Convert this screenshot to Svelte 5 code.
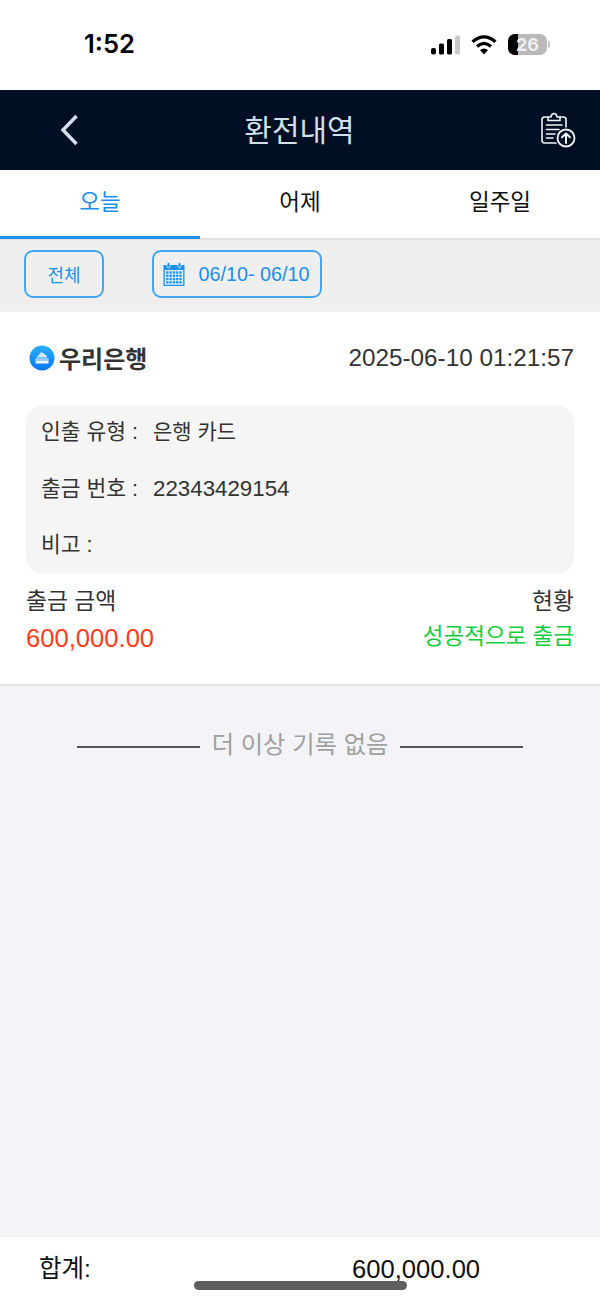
<script>
  const tabs = ['오늘', '어제', '일주일'];
  const rows = [
    { label: '인출 유형 :', value: '은행 카드', num: false },
    { label: '출금 번호 :', value: '22343429154', num: true },
    { label: '비고 :', value: '', num: false }
  ];
  const cells = [];
  for (let r = 0; r < 4; r++) for (let c = 0; c < 5; c++) cells.push({ x: 3.2 + c * 3.3, y: 9.3 + r * 3.3 });
</script>

<div class="page">
  <div class="status">
    <span class="time">1:52</span>
    <div class="status-icons">
      <svg class="signal" width="30" height="20" viewBox="0 0 30 20" aria-hidden="true">
        <rect x="1" y="13" width="5" height="6.5" rx="2" fill="#000"/>
        <rect x="9" y="8.500" width="5" height="11" rx="1.500" fill="#000"/>
        <rect x="17" y="4" width="5" height="15.500" rx="1.500" fill="#000"/>
        <rect x="25" y="0.500" width="5" height="19" rx="1.500" fill="#c9c9c9"/>
      </svg>
      <svg class="wifi" width="26" height="20" viewBox="0 0 26 20" aria-hidden="true">
        <path d="M1.500 6.800 Q13 -3.200 24.500 6.800" fill="none" stroke="#000" stroke-width="3.200"/>
        <path d="M6 11.500 Q13 5.300 20 11.500" fill="none" stroke="#000" stroke-width="3.200"/>
        <path d="M9 15 Q13 12 17 15 L13 19.500 Z" fill="#000"/>
      </svg>
      <div class="battery">
        <span class="battery-fill"></span>
        <span class="battery-num">26</span>
      </div>
      <span class="battery-cap"></span>
    </div>
  </div>

  <header class="nav">
    <svg class="back" width="20" height="32" viewBox="0 0 20 32" aria-hidden="true">
      <path d="M16.500 2 L3 16 L16.500 30" fill="none" stroke="#d3dfea" stroke-width="3.500"/>
    </svg>
    <h1>환전내역</h1>
    <svg class="upload" width="36" height="36" viewBox="0 0 36 36" aria-hidden="true">
      <g fill="none" stroke="#f2f5f8" stroke-width="1.600" stroke-linejoin="round" stroke-linecap="round">
        <path d="M8 5 H4.500 Q2 5 2 7.500 V28 Q2 31 4.500 31 H16"/>
        <path d="M20 5 H23.500 Q26 5 26 7.500 V15"/>
        <path d="M8 8.500 V5 H11 Q11.500 1.500 14 1.500 Q16.500 1.500 17 5 H20 V8.500 Z"/>
        <path d="M6.500 13 H22 M6.500 17.500 H19 M6.500 22 H15 M6.500 26 H13"/>
        <circle cx="26" cy="26" r="8.500" stroke-width="1.800"/>
        <path d="M26 31 V21.500 M22 25.300 L26 21.500 L30 25.300" stroke-width="2"/>
      </g>
    </svg>
  </header>

  <nav class="tabs">
    {#each tabs as tab, i}
      <div class="tab" class:active={i === 0}>{tab}</div>
    {/each}
  </nav>

  <div class="filters">
    <div class="chip all">전체</div>
    <div class="chip range">
      <svg width="22" height="24" viewBox="0 0 22 24" aria-hidden="true">
        <path d="M0.500 3 H21.500 V24 H0.500 Z" fill="#1b90ea"/>
        <rect x="1.800" y="8" width="18.400" height="14.800" fill="#e4f1fc"/>
        <rect x="4" y="0.500" width="3" height="5.500" rx="1.500" fill="#1b90ea" stroke="#efefef" stroke-width="0.800"/>
        <rect x="15" y="0.500" width="3" height="5.500" rx="1.500" fill="#1b90ea" stroke="#efefef" stroke-width="0.800"/>
        {#each cells as cell}
          <rect x={cell.x} y={cell.y} width="2.300" height="2.300" fill="#1b90ea"/>
        {/each}
      </svg>
      <span>06/10- 06/10</span>
    </div>
  </div>

  <section class="card">
    <div class="card-head">
      <div class="bank">
        <svg width="26" height="26" viewBox="0 0 26 26" aria-hidden="true">
          <defs>
            <linearGradient id="bankGrad" x1="0" y1="0" x2="0" y2="1">
              <stop offset="0" stop-color="#2ab0f5"/>
              <stop offset="1" stop-color="#0a74f5"/>
            </linearGradient>
          </defs>
          <circle cx="13" cy="13" r="12.500" fill="url(#bankGrad)"/>
          <path d="M7.500 12.500 L12.500 7 L18 11 L18 12.500 Z" fill="#cfe9ff"/>
          <path d="M6.500 13.500 H19.500 V18.500 H6.500 Z" fill="#eaf6ff"/>
          <path d="M6.500 15 H19.500" stroke="#4aa8f5" stroke-width="1"/>
        </svg>
        <span>우리은행</span>
      </div>
      <span class="date">2025-06-10 01:21:57</span>
    </div>

    <div class="details">
      {#each rows as row}
        <div class="row">
          <span class="label">{row.label}</span>
          {#if row.value}<span class="value" class:num={row.num}>{row.value}</span>{/if}
        </div>
      {/each}
    </div>

    <div class="summary">
      <div class="col">
        <span class="cap">출금 금액</span>
        <span class="amount">600,000.00</span>
      </div>
      <div class="col right">
        <span class="cap">현황</span>
        <span class="state">성공적으로 출금</span>
      </div>
    </div>
  </section>

  <main class="list">
    <div class="end">
      <span class="line"></span>
      <span class="end-text">더 이상 기록 없음</span>
      <span class="line"></span>
    </div>
  </main>

  <footer class="total">
    <span class="total-label">합계:</span>
    <span class="total-value">600,000.00</span>
    <span class="home"></span>
  </footer>
</div>

<style>
  :global(body) {
    margin: 0;
    background: #fff;
  }
  .page {
    position: relative;
    width: 600px;
    height: 1301px;
    display: flex;
    flex-direction: column;
    overflow: hidden;
    background: #f3f3f8;
    font-family: "Liberation Sans", "Noto Sans CJK KR", sans-serif;
  }
  .status {
    flex: 0 0 90px;
    box-sizing: border-box;
    background: #fff;
    display: flex;
    justify-content: space-between;
    align-items: flex-start;
    padding: 29px 50px 0 84px;
  }
  .time {
    font-family: Inter, "Liberation Sans", sans-serif;
    font-size: 25.500px;
    line-height: 30px;
    font-weight: 600;
    color: #000;
  }
  .status-icons {
    display: flex;
    align-items: center;
    margin-top: 5px;
  }
  .signal { margin-right: 11px; }
  .wifi { margin-right: 11px; }
  .battery {
    position: relative;
    width: 39px;
    height: 21px;
    border-radius: 7px;
    background: #b9b9b9;
    overflow: hidden;
    display: flex;
    align-items: center;
    justify-content: center;
  }
  .battery-fill {
    position: absolute;
    left: 0;
    top: 0;
    bottom: 0;
    width: 10px;
    background: #000;
  }
  .battery-num {
    position: relative;
    font-family: Inter, "Liberation Sans", sans-serif;
    font-size: 18px;
    font-weight: 700;
    color: #f0f0f0;
    line-height: 21px;
  }
  .battery-cap {
    width: 2px;
    height: 7px;
    margin-left: 1px;
    border-radius: 0 2px 2px 0;
    background: #c4c4c4;
  }
  .nav {
    flex: 0 0 80px;
    box-sizing: border-box;
    background: #000f24;
    display: flex;
    align-items: center;
    justify-content: space-between;
    padding: 0 24px 0 60px;
  }
  .nav h1 {
    margin: 0 21px 4px 0;
    font-size: 30px;
    font-weight: 400;
    color: #d3dfea;
  }
  .tabs {
    flex: 0 0 70px;
    min-height: 0;
    box-sizing: border-box;
    display: flex;
    background: #fff;
    border-bottom: 2px solid #e2e2e2;
  }
  .tab {
    flex: 1;
    height: 69px;
    box-sizing: border-box;
    text-align: center;
    padding-top: 16px;
    font-size: 22.500px;
    line-height: 34px;
    color: #111;
  }
  .tab.active {
    color: #1b90ea;
    border-bottom: 3px solid #1b90ea;
  }
  .filters {
    flex: 0 0 72px;
    box-sizing: border-box;
    background: #efefef;
    display: flex;
    gap: 48px;
    padding: 10px 24px 0;
    border-bottom: 1px solid #f2f2f2;
  }
  .chip {
    height: 48px;
    box-sizing: border-box;
    border: 2px solid #45a5ef;
    border-radius: 9px;
    color: #1b90ea;
    display: flex;
    align-items: center;
    justify-content: center;
    font-size: 18px;
  }
  .all { width: 80px; }
  .range {
    width: 170px;
    gap: 13px;
    padding-right: 1px;
    font-size: 19.800px;
  }
  .card {
    flex: 0 0 374px;
    box-sizing: border-box;
    background: #fff;
    border-bottom: 2px solid #e2e2e2;
    padding: 0 26px;
  }
  .card-head {
    display: flex;
    justify-content: space-between;
    align-items: center;
    height: 93px;
    box-sizing: border-box;
    padding-bottom: 2px;
    color: #333;
  }
  .bank {
    display: flex;
    align-items: center;
    gap: 4px;
    padding-left: 3px;
    font-size: 24px;
    font-weight: 700;
  }
  .date { font-size: 24.300px; }
  .details {
    height: 168px;
    box-sizing: border-box;
    background: #f5f5f5;
    border-radius: 16px;
    padding: 13px 15px 0;
    display: flex;
    flex-direction: column;
    gap: 28.500px;
  }
  .row {
    display: flex;
    align-items: baseline;
    color: #333;
    font-size: 21.500px;
    line-height: 28px;
  }
  .label { margin-right: 15px; }
  .value { font-size: 21px; }
  .value.num { font-size: 22.300px; }
  .summary {
    display: flex;
    justify-content: space-between;
    margin-top: 13px;
  }
  .col {
    display: flex;
    flex-direction: column;
    gap: 7px;
  }
  .right { align-items: flex-end; }
  .cap {
    font-size: 22.800px;
    line-height: 30px;
    color: #333;
  }
  .amount {
    font-size: 25.600px;
    line-height: 30px;
    color: #ff3b20;
  }
  .state {
    font-size: 22.500px;
    line-height: 28px;
    color: #12cd3e;
  }
  .list {
    flex: 1;
    background: #f3f3f8;
  }
  .end {
    display: flex;
    align-items: center;
    justify-content: center;
    gap: 12px;
    margin-top: 42px;
    height: 34px;
  }
  .line {
    width: 123px;
    height: 2px;
    background: #555;
    margin-top: 4px;
  }
  .end-text {
    font-size: 24.300px;
    line-height: 34px;
    color: #a0a0a0;
  }
  .total {
    flex: 0 0 64px;
    box-sizing: border-box;
    background: #fff;
    position: relative;
    display: flex;
    align-items: flex-start;
    padding: 15px 0 0 39px;
    line-height: 34px;
    color: #111;
  }
  .total-label {
    width: 313px;
    font-size: 24.500px;
  }
  .total-value { font-size: 25.600px; }
  .home {
    position: absolute;
    left: 194px;
    top: 44px;
    width: 213px;
    height: 9px;
    border-radius: 5px;
    background: #5e5e5e;
  }
</style>
